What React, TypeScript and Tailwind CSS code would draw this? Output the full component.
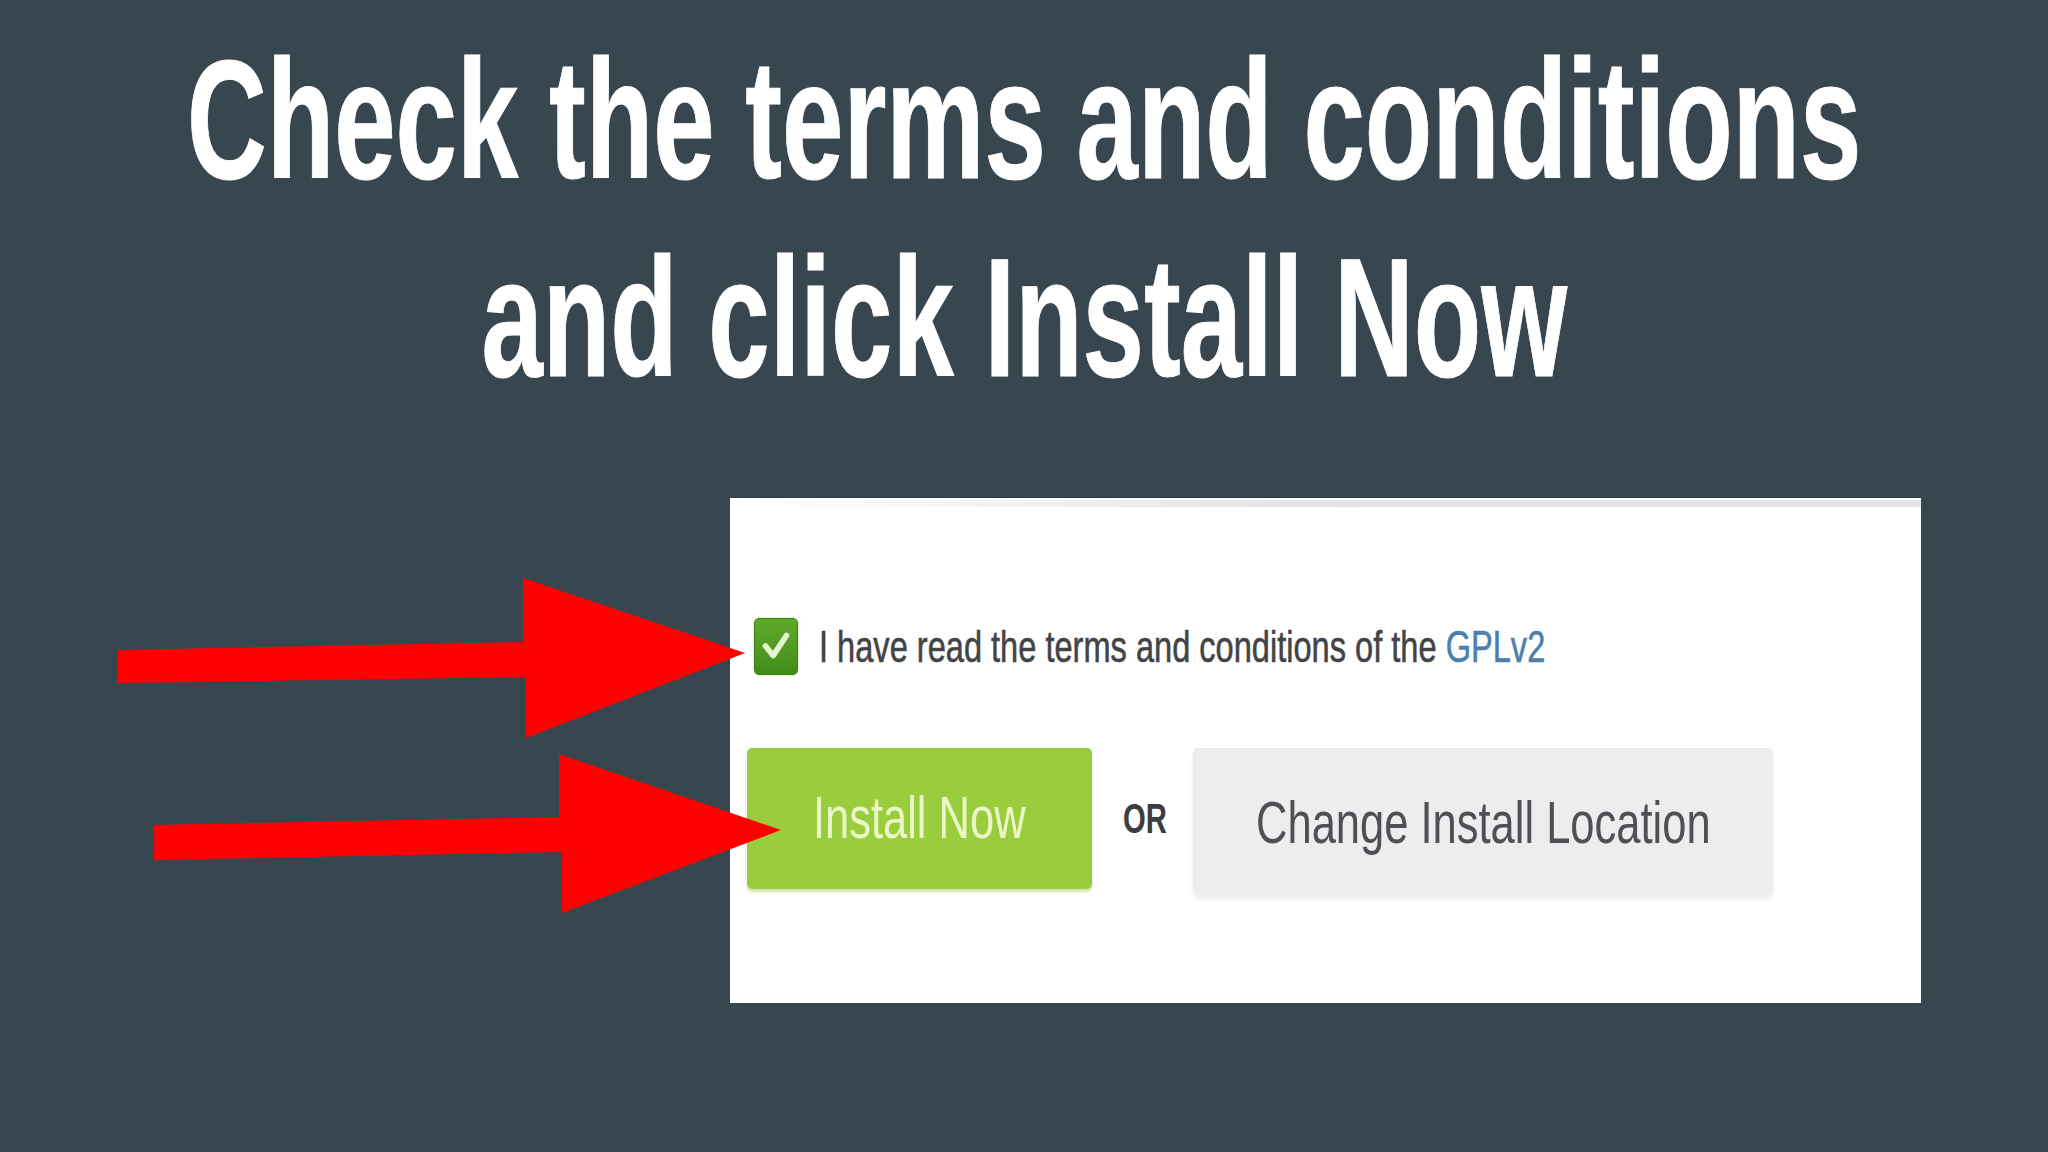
import React from 'react';

// Red pointer arrows, in page coordinates
const Arrows: React.FC = () => (
  <svg
    className="absolute inset-0 w-full h-full pointer-events-none"
    viewBox="0 0 2048 1152"
    width={2048}
    height={1152}
  >
    <polygon
      fill="#ff0000"
      points="118,650 523,642 523,578 745,653 526,738 526,677 118,683"
    />
    <polygon
      fill="#ff0000"
      points="154,825 559,817 559,754 781,830 562,913 562,852 154,860"
    />
  </svg>
);

const CheckBox: React.FC = () => (
  <div className="w-[44px] h-[57px] shrink-0 rounded-[5px] border border-[#3b7f15] bg-gradient-to-b from-[#5ea92c] to-[#428d19] shadow-[0_0_3px_rgba(150,200,60,0.5)]">
    <svg viewBox="0 0 44 57" className="w-full h-full">
      <polyline
        points="11,28 19,38 33,17"
        fill="none"
        stroke="#e4f4cc"
        strokeWidth={6}
        strokeLinecap="round"
        strokeLinejoin="round"
      />
    </svg>
  </div>
);

export default function App() {
  return (
    <div className="relative w-[2048px] h-[1152px] overflow-hidden bg-[#37464f] flex flex-col">
      {/* Heading */}
      <h1 className="self-center w-max pt-[21px] text-center text-white text-[168px] leading-[198px] font-bold font-['Liberation_Sans',Arial,sans-serif] scale-x-[0.657] origin-center [-webkit-text-stroke:1px_#ffffff] whitespace-nowrap">
        <span className="block">Check the terms and conditions</span>
        <span className="block">and click Install Now</span>
      </h1>

      {/* Installer panel */}
      <div className="ml-[730px] mt-[80px] w-[1191px] h-[506px] bg-white border-t border-[#2f3d45] flex flex-col font-['Liberation_Sans',Arial,sans-serif]">
        <div className="mt-[2px] ml-[22px] h-[7px] bg-gradient-to-r from-white via-[#e2e2e6] to-[#e4e3e8] shrink-0" />

        <div className="mt-[111px] ml-[24px] flex items-center gap-[21px]">
          <CheckBox />
          <span className="text-[45px] leading-[57px] text-[#434346] whitespace-nowrap scale-x-[0.724] origin-left [-webkit-text-stroke:0.6px_#434346]">
            I have read the terms and conditions of the{' '}
            <span className="text-[#4c7fae] [-webkit-text-stroke:0.6px_#4c7fae]">GPLv2</span>
          </span>
        </div>

        <div className="mt-[73px] ml-[17px] flex items-start">
          <button className="w-[345px] h-[141px] rounded-[5px] bg-[#9acd3e] shadow-[0_3px_3px_rgba(140,180,50,0.35)] flex items-center justify-center">
            <span className="text-[59px] text-[#ecf7c8] whitespace-nowrap scale-x-[0.737]">
              Install Now
            </span>
          </button>
          <div className="w-[101px] h-[141px] flex items-center justify-center">
            <span className="text-[43px] font-bold text-[#3d3d40] scale-x-[0.68] pl-[8px]">OR</span>
          </div>
          <button className="w-[580px] h-[147px] rounded-[5px] bg-[#ededef] shadow-[0_4px_4px_rgba(0,0,0,0.07)] flex items-center justify-center">
            <span className="text-[59px] text-[#505054] whitespace-nowrap scale-x-[0.737] pt-[4px]">
              Change Install Location
            </span>
          </button>
        </div>
      </div>

      <Arrows />
    </div>
  );
}
